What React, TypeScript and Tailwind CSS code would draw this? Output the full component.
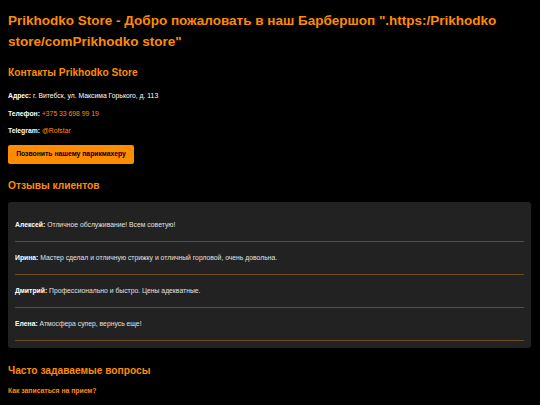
export default function App() {
  const reviews = [
    { name: "Алексей:", text: "Отличное обслуживание! Всем советую!" },
    { name: "Ирина:", text: "Мастер сделал и отличную стрижку и отличный горловой, очень довольна." },
    { name: "Дмитрий:", text: "Профессионально и быстро. Цены адекватные." },
    { name: "Елена:", text: "Атмосфера супер, вернусь еще!" },
  ];
  return (
    <div className="min-h-[405px] bg-black px-2 pt-[10px] text-white" style={{ fontFamily: '"Liberation Sans", Arial, sans-serif' }}>
      <h1 className="text-[13.5px] font-bold leading-[21px] text-[#ff8c00]">
        Prikhodko Store - Добро пожаловать в наш Барбершоп ".https:/Prikhodko store/comPrikhodko store"
      </h1>
      <h2 className="mt-[14px] text-[10.2px] font-bold leading-[14px] text-[#ff8c00]">Контакты Prikhodko Store</h2>
      <p className="mt-[12px] text-[6.8px] leading-[8px]"><b>Адрес:</b> г. Витебск, ул. Максима Горького, д. 113</p>
      <p className="mt-[9.5px] text-[6.8px] leading-[8px]"><b>Телефон:</b> <span className="text-[#ff8c00]">+375 33 698 99 19</span></p>
      <p className="mt-[9.5px] text-[6.8px] leading-[8px]"><b>Telegram:</b> <span className="text-[#ff8c00]">@Rofstar</span></p>
      <button className="mt-[10px] flex h-[19px] w-[126px] items-center justify-center rounded-[2px] bg-[#ff8c00] text-[6.8px] font-bold text-black">
        Позвонить нашему парикмахеру
      </button>
      <h2 className="mt-[15px] text-[10.2px] font-bold leading-[14px] text-[#ff8c00]">Отзывы клиентов</h2>
      <div className="mt-[9px] mr-[1px] rounded-[3px] bg-[#222222] px-[7px] py-[7px]">
        {reviews.map((r) => (
          <div key={r.name} className="border-b border-[#6b4a24] pt-[12px] pb-[12px] text-[6.8px] leading-[8px] text-[#e0e0e0]">
            <b className="text-white">{r.name}</b> {r.text}
          </div>
        ))}
      </div>
      <h2 className="mt-[16px] text-[10.2px] font-bold leading-[14px] text-[#ff8c00]">Часто задаваемые вопросы</h2>
      <p className="mt-[9px] text-[6.8px] font-bold leading-[8px] text-[#ff8c00]">Как записаться на прием?</p>
    </div>
  );
}
